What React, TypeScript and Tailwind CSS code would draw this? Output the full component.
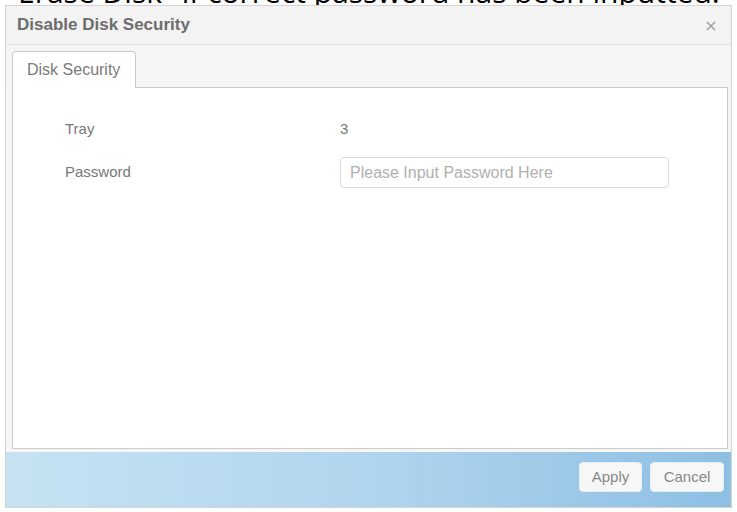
import React from "react";

export default function App() {
  return (
    <div className="relative w-[737px] h-[512px] overflow-hidden bg-white">
      <div className="h-[5px] overflow-hidden pl-[18px]">
        <div className="mt-[-25px] whitespace-nowrap text-[30px] leading-[34px] text-black [font-family:'Open_Sans',sans-serif]">
          Erase Disk" if correct password has been inputted.
        </div>
      </div>
      <div className="ml-[5px] flex h-[503px] w-[727px] flex-col border border-[#d4d4d4] bg-[#f6f6f6] [font-family:'Liberation_Sans',Arial,sans-serif]">
        <div className="flex h-[39px] items-center justify-between border-b border-[#e4e4e4] bg-[#f3f3f3] pl-[11px] pr-[15px]">
          <span className="text-[17px] font-bold text-[#6d6d6d]">Disable Disk Security</span>
          <svg width="10" height="10" viewBox="0 0 10 10" className="mt-[1px]">
            <path d="M1 1 L9 9 M9 1 L1 9" stroke="#a0a0a0" strokeWidth="1.6" />
          </svg>
        </div>
        <div className="flex h-[42px] items-end bg-[#f5f5f5] pl-[6px]">
          <div className="relative z-10 mb-[-1px] flex h-[37px] w-[124px] items-center rounded-t-[4px] border border-b-0 border-[#c9c9c9] bg-white pl-[14px] text-[16px] text-[#7a7a7a]">
            Disk Security
          </div>
        </div>
        <div className="ml-[6px] mr-[3px] flex-1 border border-[#cbcbcb] bg-white pl-[52px] pt-[28px] text-[15px] text-[#777]">
          <div className="flex h-[26px] items-center">
            <div className="w-[275px]">Tray</div>
            <div>3</div>
          </div>
          <div className="mt-[15px] flex h-[31px] items-center">
            <div className="w-[275px]">Password</div>
            <div className="flex h-[31px] w-[329px] items-center rounded-[4px] border border-[#dcdcdc] bg-white pl-[9px] text-[16px] text-[#b0b0b0]">
              Please Input Password Here
            </div>
          </div>
        </div>
        <div className="mt-[3px] flex h-[55px] items-start justify-end gap-[8px] bg-gradient-to-r from-[#c6e2f2] via-[#b0d5ee] to-[#8dbfe3] pr-[7px] pt-[10px]">
          <div className="flex h-[30px] w-[63px] items-center justify-center rounded-[4px] border border-[#e6eef4] bg-[#f7f7f7] text-[15px] text-[#888]">
            Apply
          </div>
          <div className="flex h-[30px] w-[74px] items-center justify-center rounded-[4px] border border-[#e6eef4] bg-[#f7f7f7] text-[15px] text-[#888]">
            Cancel
          </div>
        </div>
      </div>
    </div>
  );
}
